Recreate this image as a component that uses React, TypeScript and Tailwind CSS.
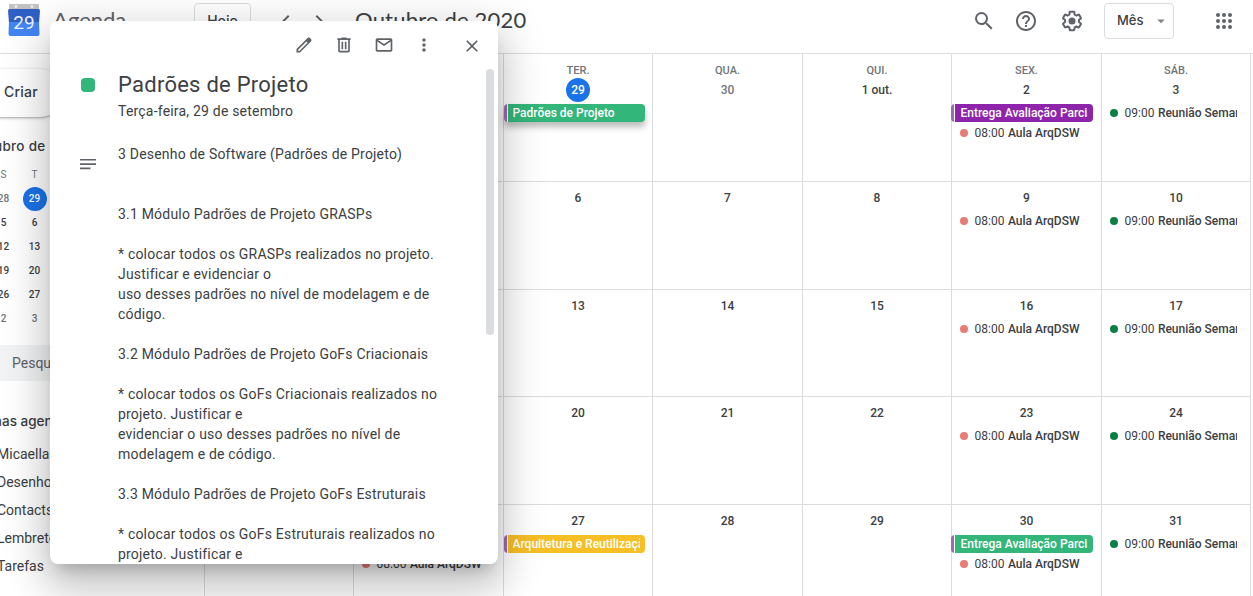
import React from "react";
import { MdArrowDropDown, MdChevronLeft, MdChevronRight, MdClose, MdHelpOutline, MdMoreVert, MdSearch } from "react-icons/md";

type CalEvent = { kind: "chip" | "timed"; title: string; tone: string; time?: string; raised?: boolean; early?: boolean };
type Day = { label: string; weekday?: string; muted?: boolean; today?: boolean; events?: CalEvent[] };

const aula: CalEvent = { kind: "timed", title: "Aula ArqDSW", time: "08:00", tone: "bg-[#e67c73]" };
const reuniao: CalEvent = { kind: "timed", title: "Reunião Semanal", time: "09:00", tone: "bg-[#0b8043]" };

const weeks: { height: string; days: Day[] }[] = [
  {
    height: "h-[128px]",
    days: [
      { weekday: "DOM.", label: "27", muted: true },
      { weekday: "SEG.", label: "28", muted: true },
      { weekday: "TER.", label: "29", today: true, events: [{ kind: "chip", title: "Padrões de Projeto", tone: "bg-[#33b679]", raised: true }] },
      { weekday: "QUA.", label: "30", muted: true },
      { weekday: "QUI.", label: "1 out." },
      { weekday: "SEX.", label: "2", events: [{ kind: "chip", title: "Entrega Avaliação Parcial", tone: "bg-[#8e24aa]", early: true }, aula] },
      { weekday: "SÁB.", label: "3", events: [reuniao] },
    ],
  },
  {
    height: "h-[108px]",
    days: [{ label: "4" }, { label: "5" }, { label: "6" }, { label: "7" }, { label: "8" }, { label: "9", events: [aula] }, { label: "10", events: [reuniao] }],
  },
  {
    height: "h-[107px]",
    days: [{ label: "11" }, { label: "12" }, { label: "13" }, { label: "14" }, { label: "15" }, { label: "16", events: [aula] }, { label: "17", events: [reuniao] }],
  },
  {
    height: "h-[108px]",
    days: [{ label: "18" }, { label: "19" }, { label: "20" }, { label: "21" }, { label: "22" }, { label: "23", events: [aula] }, { label: "24", events: [reuniao] }],
  },
  {
    height: "h-[108px]",
    days: [
      { label: "25" },
      { label: "26", events: [{ kind: "chip", title: "Arquitetura", tone: "bg-[#f6bf26]" }, aula] },
      { label: "27", events: [{ kind: "chip", title: "Arquitetura e Reutilização", tone: "bg-[#f6bf26]" }] },
      { label: "28" },
      { label: "29" },
      { label: "30", events: [{ kind: "chip", title: "Entrega Avaliação Parcial", tone: "bg-[#33b679]", early: true }, aula] },
      { label: "31", events: [reuniao] },
    ],
  },
];

const miniWeeks = [["28", "29"], ["5", "6"], ["12", "13"], ["19", "20"], ["26", "27"], ["2", "3"]];
const agendas = ["Micaella", "Desenho", "Contacts", "Lembretes", "Tarefas"];

const description = [
  "3 Desenho de Software (Padrões de Projeto)", "", "",
  "3.1 Módulo Padrões de Projeto GRASPs", "",
  "* colocar todos os GRASPs realizados no projeto.", "Justificar e evidenciar o",
  "uso desses padrões no nível de modelagem e de", "código.", "",
  "3.2 Módulo Padrões de Projeto GoFs Criacionais", "",
  "* colocar todos os GoFs Criacionais realizados no", "projeto. Justificar e",
  "evidenciar o uso desses padrões no nível de", "modelagem e de código.", "",
  "3.3 Módulo Padrões de Projeto GoFs Estruturais", "",
  "* colocar todos os GoFs Estruturais realizados no", "projeto. Justificar e",
];

function Icon({ d, className = "size-5" }: { d: string; className?: string }) {
  return (
    <svg viewBox="0 0 24 24" fill="currentColor" className={className}>
      <path d={d} />
    </svg>
  );
}

const editPath = "M20.41 4.94l-1.35-1.35c-.78-.78-2.05-.78-2.83 0L3 16.82V21h4.18L20.41 7.77c.79-.78.79-2.05 0-2.83zm-14 14.12L5 19v-1.36l9.82-9.82 1.41 1.41-9.82 9.83z";
const trashPath = "M15 4V3H9v1H4v2h1v13c0 1.1.9 2 2 2h10c1.1 0 2-.9 2-2V6h1V4h-5zm2 15H7V6h10v13zM9 8h2v9H9zm4 0h2v9h-2z";
const mailPath = "M20 4H4c-1.1 0-2 .9-2 2v12c0 1.1.9 2 2 2h16c1.1 0 2-.9 2-2V6c0-1.1-.9-2-2-2zm-.8 2L12 10.8 4.8 6h14.4zM4 18V7.87l8 5.33 8-5.33V18H4z";
const gearPath = "M13.85 22.25h-3.7c-.74 0-1.36-.54-1.45-1.27l-.27-1.89c-.27-.14-.53-.29-.79-.46l-1.8.72c-.7.26-1.47-.03-1.81-.65L2.2 15.53c-.35-.66-.2-1.44.36-1.88l1.53-1.19c-.01-.15-.02-.3-.02-.46 0-.15.01-.31.02-.46l-1.52-1.19c-.59-.45-.74-1.26-.37-1.88l1.85-3.19c.34-.62 1.11-.9 1.79-.63l1.81.73c.26-.17.52-.32.78-.46l.27-1.91c.09-.7.71-1.25 1.44-1.25h3.7c.74 0 1.36.54 1.45 1.27l.27 1.89c.27.14.53.29.79.46l1.8-.72c.71-.26 1.48.03 1.82.65l1.84 3.18c.36.66.2 1.44-.36 1.88l-1.52 1.19c.01.15.02.3.02.46s-.01.31-.02.46l1.52 1.19c.56.45.72 1.23.37 1.86l-1.86 3.22c-.34.62-1.11.9-1.8.63l-1.8-.72c-.26.17-.52.32-.78.46l-.27 1.91c-.1.68-.72 1.22-1.46 1.22zm-3.23-2h2.76l.37-2.55.53-.22c.44-.18.88-.44 1.34-.78l.45-.34 2.38.96 1.38-2.4-2.03-1.58.07-.56c.03-.26.06-.51.06-.78s-.03-.53-.06-.78l-.07-.56 2.03-1.58-1.39-2.4-2.39.96-.45-.35c-.42-.32-.87-.58-1.33-.77l-.52-.22-.37-2.55h-2.76l-.37 2.55-.53.21c-.44.19-.88.44-1.34.79l-.45.33-2.38-.95-1.39 2.39 2.03 1.58-.07.56a7 7 0 0 0-.06.79c0 .26.02.53.06.78l.07.56-2.03 1.58 1.38 2.4 2.39-.96.45.35c.43.33.86.58 1.33.77l.53.22.38 2.55zM15.5 12a3.5 3.5 0 1 1-7 0 3.5 3.5 0 0 1 7 0z";

function Logo() {
  return (
    <svg viewBox="0 0 32 32" className="mb-0.5 size-8 shrink-0">
      <path d="M2 0h28a1.200 1.200 0 0 1 1 1.200V6H1V1.200A1.200 1.200 0 0 1 2 0z" fill="#c2c2c2" />
      <circle cx="8" cy="2.500" r="1.400" fill="#eee" />
      <circle cx="24" cy="2.500" r="1.400" fill="#eee" />
      <path d="M0 6.500Q0 5 1.500 5h29Q32 5 32 6.500L31 19H1z" fill="#3060c6" />
      <path d="M1 18h30l.5 12q0 2-2 2h-27q-2 0-2-2z" fill="#4285f4" />
      <text x="16" y="25" textAnchor="middle" fontFamily="Roboto, sans-serif" fontSize="19" fill="#eef2fb">29</text>
    </svg>
  );
}

function Header() {
  return (
    <header className="flex h-[54px] shrink-0 border-b border-[#dadce0] text-[#5f6368]">
      <div className="flex h-[42px] w-full items-center pl-2 pr-[17px]">
        <Logo />
        <span className="mb-0.5 ml-[13px] w-[141px] font-[Lato,sans-serif] text-[22px] leading-7">Agenda</span>
        <button className="h-9 w-[57px] rounded border border-[#dadce0] font-[Inter,sans-serif] text-sm font-medium text-[#3c4043]">Hoje</button>
        <MdChevronLeft className="ml-[23px] size-6" />
        <MdChevronRight className="ml-[9px] size-6" />
        <h1 className="mb-0.5 ml-6 font-[Lato,sans-serif] text-[22px] leading-7 tracking-[0.2px] text-[#3c4043]">Outubro de 2020</h1>
        <div className="ml-auto flex items-center">
          <MdSearch className="size-6" />
          <MdHelpOutline className="ml-[18px] size-6" />
          <Icon d={gearPath} className="ml-[22px] size-6" />
          <button className="ml-5 flex h-9 w-[70px] items-center justify-between rounded border border-[#dadce0] pl-3 pr-[3px] font-[Inter,sans-serif] text-[13px] font-medium text-[#3c4043]">
            Mês
            <MdArrowDropDown className="size-[18px] text-[#80868b]" />
          </button>
          <svg viewBox="0 0 24 24" fill="currentColor" className="ml-[38px] size-6">
            {[6, 12, 18].map((y) => [6, 12, 18].map((x) => <circle key={`${x}-${y}`} cx={x} cy={y} r="2" />))}
          </svg>
        </div>
      </div>
    </header>
  );
}

function Sidebar() {
  return (
    <aside className="flex w-[204px] shrink-0 flex-col overflow-hidden text-[#3c4043]">
      <button className="-ml-12 mt-[15px] flex h-12 w-[112px] shrink-0 items-center rounded-full pb-[3px] pl-[52px] font-[Inter,sans-serif] text-[14px] font-medium tracking-[0.2px] shadow-[0_1px_2px_0_rgba(60,64,67,0.3),0_1px_3px_1px_rgba(60,64,67,0.15)]">
        Criar
      </button>
      <h2 className="-ml-[30px] mt-[19px] shrink-0 whitespace-nowrap font-[Inter,sans-serif] text-[13.5px] font-medium leading-5 tracking-[0.3px]">Outubro de 2020</h2>
      <div className="-ml-[8.5px] mt-[7px] grid w-[55px] shrink-0 grid-cols-[24px_24px] gap-x-[7px] text-center text-[10px] font-medium leading-6">
        <span className="font-normal text-[#70757a]">S</span>
        <span className="font-normal text-[#70757a]">T</span>
        {miniWeeks.map((week, r) =>
          week.map((day, c) => (
            <span
              key={`${r}-${c}`}
              className={r === 0 && c === 1 ? "rounded-full bg-[#1a73e8] text-white" : r === 0 || r === 5 ? "text-[#70757a]" : ""}
            >
              {day}
            </span>
          )),
        )}
      </div>
      <div className="mt-[14px] flex h-9 shrink-0 items-center bg-[#f1f3f4] pl-3 text-sm text-[#5f6368]">Pesquisar</div>
      <h2 className="-ml-[30px] mt-[30px] shrink-0 whitespace-nowrap font-[Inter,sans-serif] text-[13.5px] font-medium leading-5">Minhas agendas</h2>
      <ul className="-ml-[3px] mt-[9px] text-sm leading-7">
        {agendas.map((name) => (
          <li key={name}>{name}</li>
        ))}
      </ul>
    </aside>
  );
}

function EventRow({ event }: { event: CalEvent }) {
  if (event.kind === "chip") {
    return (
      <div
        className={`mb-0.5 flex h-[18px] gap-px overflow-hidden rounded ${event.early ? "-ml-px mr-2" : "mr-[7px]"} ${event.raised ? "shadow-[0_5px_6px_0_rgba(60,64,67,0.35)]" : ""}`}
      >
        <span className="w-[3px] shrink-0 bg-[#9e69af]" />
        <span className={`min-w-0 grow pr-[5px] text-white ${event.early ? "pl-[5.5px]" : "pl-[4.5px]"} ${event.tone}`}>
          <span className="block overflow-hidden whitespace-nowrap">{event.title}</span>
        </span>
      </div>
    );
  }
  return (
    <div className="mb-0.5 mr-[13px] flex h-[18px] items-center overflow-hidden whitespace-nowrap pl-2 text-[#3c4043]">
      <span className={`mr-[6.5px] size-2 shrink-0 rounded-full ${event.tone}`} />
      <span className="mr-[3.5px] font-normal">{event.time}</span>
      <span>{event.title}</span>
    </div>
  );
}

function DayCell({ day }: { day: Day }) {
  const tone = day.today ? "bg-[#1a73e8] text-white" : day.muted ? "text-[#70757a]" : "text-[#3c4043]";
  return (
    <div className="flex min-w-0 flex-col border-b border-l border-[#dadce0] text-xs font-medium leading-[18px]">
      {day.weekday ? <div className="mt-[9px] h-[15px] text-center text-[11px] leading-4 text-[#70757a]">{day.weekday}</div> : null}
      <div className={`mb-0.5 flex h-6 min-w-6 items-center justify-center self-center whitespace-nowrap rounded-full ${day.weekday ? "" : "mt-1"} ${tone}`}>
        {day.label}
      </div>
      {day.events?.map((event, i) => <EventRow key={i} event={event} />)}
    </div>
  );
}

function MonthGrid() {
  return (
    <main className="flex grow flex-col">
      {weeks.map((week, i) => (
        <div key={i} className="flex shrink-0">
          <div className={`grid shrink-0 grid-cols-[149px_150px_149px_150px_149px_150px_149px] ${week.height}`}>
            {week.days.map((day) => (
              <DayCell key={day.label} day={day} />
            ))}
          </div>
          <div className="grow border-l border-[#dadce0]" />
        </div>
      ))}
    </main>
  );
}

function EventPopup() {
  return (
    <section className="absolute left-[50px] top-[21px] flex h-[543px] w-[448px] flex-col overflow-hidden rounded-lg bg-white text-[#3c4043] shadow-[0_24px_38px_3px_rgba(0,0,0,0.14),0_9px_46px_8px_rgba(0,0,0,0.12),0_11px_15px_-7px_rgba(0,0,0,0.2)]">
      <div className="flex h-12 shrink-0 items-center justify-end gap-5 pr-4 text-[#5f6368]">
        <Icon d={editPath} />
        <Icon d={trashPath} />
        <Icon d={mailPath} />
        <MdMoreVert className="size-5" />
        <MdClose className="ml-2 mt-0.5 size-5" />
      </div>
      <div className="flex min-h-0 grow overflow-hidden">
        <div className="flex w-[436px] shrink-0 flex-col">
          <div className="flex">
            <div className="flex w-[68px] shrink-0 pl-[31px] pt-[9px]">
              <span className="size-[14px] rounded bg-[#33b679]" />
            </div>
            <div>
              <h2 className="mt-0.5 text-[22px] leading-7 tracking-[0.25px]">Padrões de Projeto</h2>
              <p className="mt-0.5 text-sm leading-5 tracking-[0.2px]">Terça-feira, 29 de setembro</p>
            </div>
          </div>
          <div className="mt-[23px] flex">
            <div className="w-[68px] shrink-0 pl-[30px] pt-[15px]">
              <svg viewBox="0 0 16 11" className="h-[11px] w-4" fill="#5f6368">
                <path d="M0 0h16v1.600H0zM0 4.300h16v1.600H0zM0 8.600h10.500v1.600H0z" />
              </svg>
            </div>
            <div className="text-sm leading-5 tracking-[0.2px]">
              {description.map((line, i) => (
                <p key={i} className="h-5 whitespace-nowrap">{line}</p>
              ))}
            </div>
          </div>
        </div>
        <div className="h-[266px] w-2 shrink-0 rounded bg-[#dadce0]" />
      </div>
    </section>
  );
}

export default function App() {
  return (
    <div className="relative flex h-[596px] w-[1253px] flex-col overflow-hidden bg-white font-[Roboto,sans-serif]">
      <Header />
      <div className="flex min-h-0 grow overflow-hidden">
        <Sidebar />
        <MonthGrid />
      </div>
      <EventPopup />
    </div>
  );
}
